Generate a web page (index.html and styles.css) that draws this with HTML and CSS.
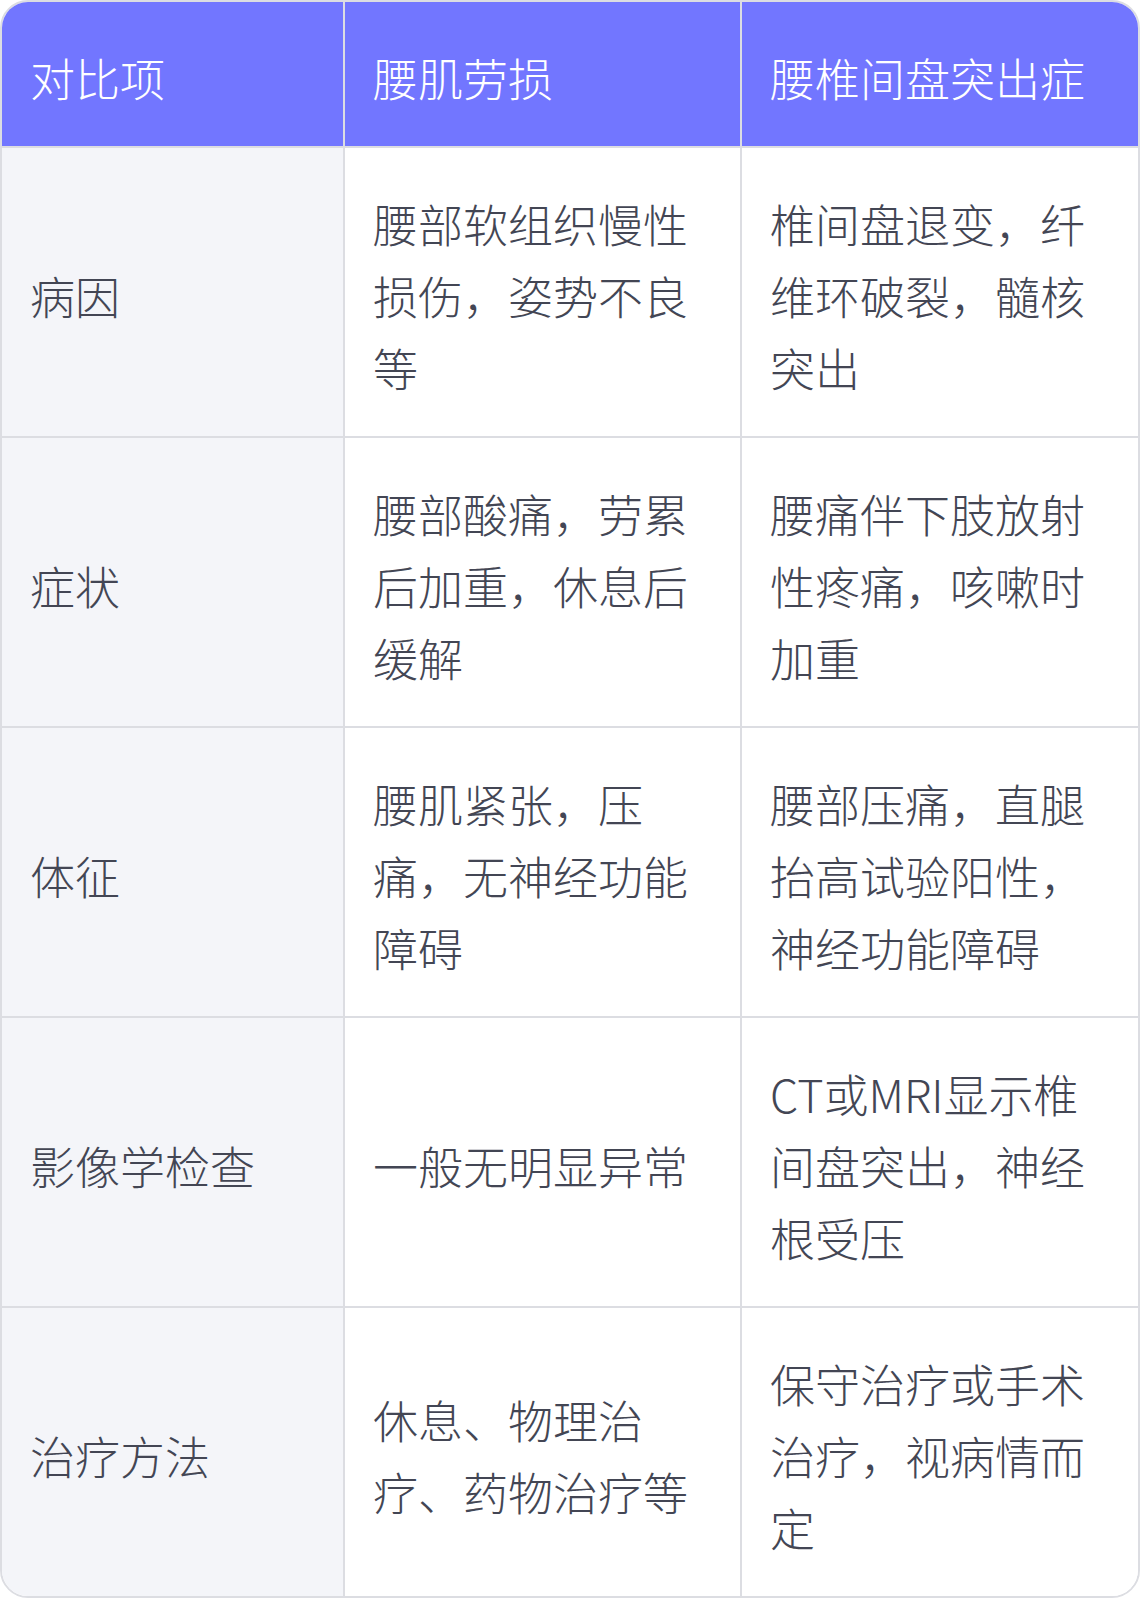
FILE: index.html
```html
<!DOCTYPE html>
<html lang="zh-CN">
<head>
<meta charset="utf-8">
<title>腰肌劳损与腰椎间盘突出症对比</title>
<link rel="stylesheet" href="styles.css">
</head>
<body>
<div class="card">
  <table class="compare">
    <colgroup>
      <col class="c1"><col class="c2"><col class="c3">
    </colgroup>
    <thead>
      <tr>
        <th>对比项</th>
        <th>腰肌劳损</th>
        <th>腰椎间盘突出症</th>
      </tr>
    </thead>
    <tbody>
      <tr>
        <td class="label">病因</td>
        <td>腰部软组织慢性损伤，姿势不良等</td>
        <td>椎间盘退变，纤维环破裂，髓核突出</td>
      </tr>
      <tr>
        <td class="label">症状</td>
        <td>腰部酸痛，劳累后加重，休息后缓解</td>
        <td>腰痛伴下肢放射性疼痛，咳嗽时加重</td>
      </tr>
      <tr>
        <td class="label">体征</td>
        <td>腰肌紧张，压痛，无神经功能障碍</td>
        <td>腰部压痛，直腿抬高试验阳性，神经功能障碍</td>
      </tr>
      <tr>
        <td class="label">影像学检查</td>
        <td>一般无明显异常</td>
        <td>CT或MRI显示椎间盘突出，神经根受压</td>
      </tr>
      <tr>
        <td class="label">治疗方法</td>
        <td>休息、物理治疗、药物治疗等</td>
        <td>保守治疗或手术治疗，视病情而定</td>
      </tr>
    </tbody>
  </table>
</div>
</body>
</html>
```

FILE: styles.css
```css
html, body {
  margin: 0;
  padding: 0;
  background: #ffffff;
}

.card {
  width: 1140px;
  box-sizing: border-box;
  border: 2px solid #dcdde2;
  border-radius: 28px;
  overflow: hidden;
  background: #ffffff;
}

.compare {
  width: 100%;
  border-collapse: separate;
  border-spacing: 0;
  table-layout: fixed;
  font-family: "Noto Sans CJK SC", "Noto Sans", sans-serif;
  font-weight: 200;
  font-size: 45px;
  line-height: 72px;
  color: #434654;
}

.c1 { width: 343px; }
.c2 { width: 397px; }
.c3 { width: 396px; }

.compare th,
.compare td {
  padding: 7px 28px 0 28px;
  text-align: left;
  vertical-align: middle;
  border-right: 2px solid #dcdde2;
  border-bottom: 2px solid #dcdde2;
  font-weight: 200;
}

.compare th:last-child,
.compare td:last-child {
  border-right: none;
}

.compare tbody tr:last-child td {
  border-bottom: none;
}

.compare th {
  height: 137px;
  background: #7276ff;
  color: #ffffff;
}

.compare td {
  height: 281px;
  background: #ffffff;
}

.compare td.label {
  background: #f4f5f9;
}
```
